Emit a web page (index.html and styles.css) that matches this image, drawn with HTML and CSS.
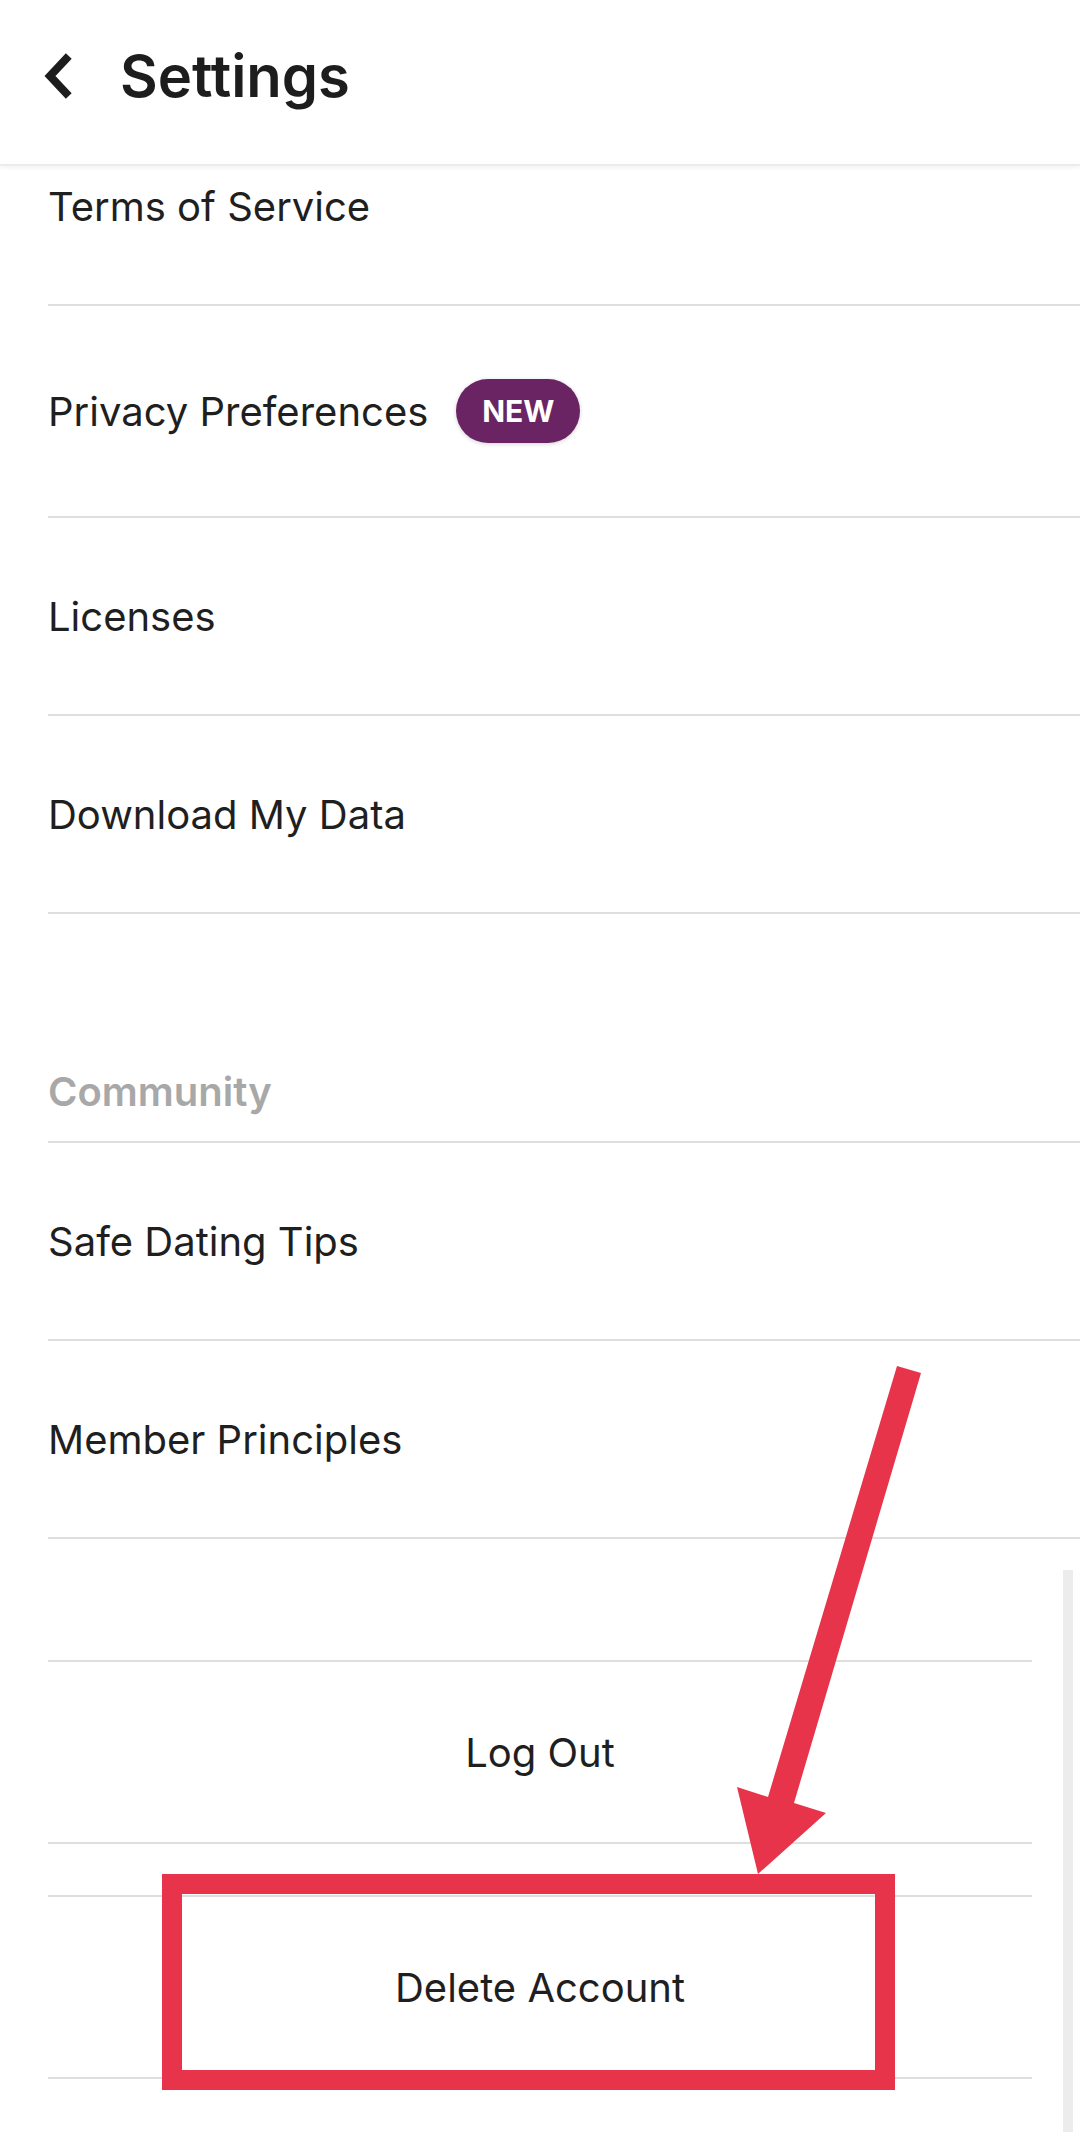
FILE: index.html
```html
<!DOCTYPE html>
<html lang="en">
<head>
<meta charset="utf-8">
<title>Settings</title>
<link rel="stylesheet" href="styles.css">
</head>
<body>
<div class="screen">
  <header class="topbar">
    <svg class="back" width="34" height="46" viewBox="0 0 34 46" aria-hidden="true">
      <polyline points="24,6 8,23 24,40" fill="none" stroke="#1d1d1d" stroke-width="8" stroke-linecap="square" stroke-linejoin="miter"/>
    </svg>
    <h1 class="title">Settings</h1>
  </header>
  <div class="viewport">
    <div class="list">
      <div class="row">Terms of Service</div>
      <div class="row row-tall">Privacy Preferences <span class="badge">NEW</span></div>
      <div class="row">Licenses</div>
      <div class="row">Download My Data</div>
      <div class="section-title">Community</div>
      <div class="row">Safe Dating Tips</div>
      <div class="row">Member Principles</div>
      <div class="actions">
        <div class="action">Log Out</div>
        <div class="action action-delete">Delete Account</div>
      </div>
    </div>
  </div>
  <div class="highlight"></div>
  <svg class="arrow" width="1080" height="2132" viewBox="0 0 1080 2132" aria-hidden="true">
    <polygon points="897,1366 921,1373 794,1803 826,1813 758,1874 737,1787 768,1797" fill="#e8344a"/>
  </svg>
</div>
</body>
</html>
```

FILE: styles.css
```css
* { box-sizing: border-box; }

html, body {
  margin: 0;
  padding: 0;
  background: #ffffff;
}

body {
  width: 1080px;
  height: 2132px;
  overflow: hidden;
  font-family: Inter, Roboto, "Liberation Sans", sans-serif;
  color: #1f1f1f;
}

.screen {
  position: relative;
  width: 1080px;
  height: 2132px;
  overflow: hidden;
}

.topbar {
  position: relative;
  z-index: 2;
  height: 166px;
  display: flex;
  align-items: center;
  padding: 0 0 12px 42px;
  background: #ffffff;
  border-bottom: 2px solid #ececec;
  box-shadow: 0 2px 4px rgba(0, 0, 0, 0.05);
}

.back {
  display: block;
  flex: none;
}

.title {
  margin: 0 0 0 44px;
  font-size: 58px;
  font-weight: 600;
  color: #1d1d1d;
  letter-spacing: 0;
}

.viewport {
  position: relative;
  z-index: 1;
  height: 1966px;
  overflow: hidden;
}

.list {
  margin-top: -58px;
}

.row {
  margin-left: 48px;
  height: 198px;
  display: flex;
  align-items: center;
  border-bottom: 2px solid #dedede;
  font-size: 40px;
  font-weight: 400;
  color: #1f1f1f;
}

.row-tall {
  height: 212px;
}

.badge {
  margin-left: 28px;
  width: 124px;
  height: 64px;
  border-radius: 32px;
  background: #6a2463;
  color: #ffffff;
  font-size: 30px;
  font-weight: 700;
  display: flex;
  align-items: center;
  justify-content: center;
  box-shadow: 0 1px 4px rgba(0, 0, 0, 0.18);
}

.section-title {
  margin-left: 48px;
  height: 229px;
  padding-top: 128px;
  display: flex;
  align-items: center;
  border-bottom: 2px solid #dedede;
  font-size: 40px;
  font-weight: 600;
  color: #a8a8a8;
}

.actions {
  position: relative;
  margin: 0 48px;
  padding-top: 121px;
  display: flex;
  flex-direction: column;
  gap: 51px;
}

.actions::after {
  content: "";
  position: absolute;
  top: 31px;
  right: -41px;
  width: 10px;
  height: 700px;
  background: #ececec;
}

.action {
  height: 184px;
  display: flex;
  align-items: center;
  justify-content: center;
  border-top: 2px solid #dedede;
  border-bottom: 2px solid #dedede;
  font-size: 40px;
  font-weight: 400;
  color: #1f1f1f;
}

.highlight {
  position: absolute;
  z-index: 3;
  left: 162px;
  top: 1874px;
  width: 733px;
  height: 216px;
  border: 20px solid #e8344a;
  pointer-events: none;
}

.arrow {
  position: absolute;
  z-index: 3;
  left: 0;
  top: 0;
  pointer-events: none;
}
```
